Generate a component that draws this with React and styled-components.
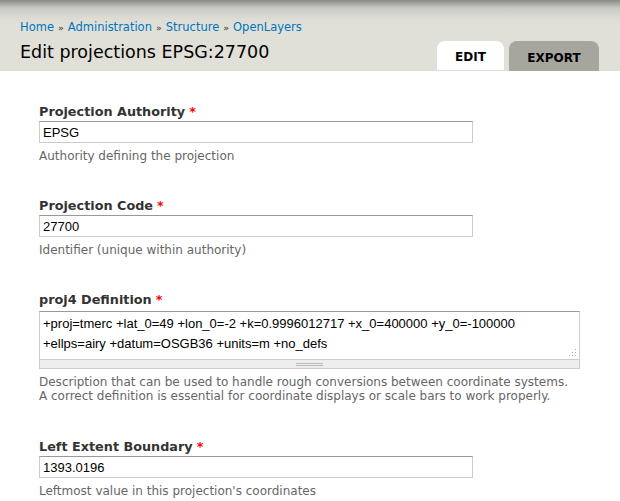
import React from "react";
import styled, { createGlobalStyle } from "styled-components";

const Global = createGlobalStyle`
  html, body {
    margin: 0;
    padding: 0;
    background: #fff;
  }
  body {
    font-family: "DejaVu Sans", Verdana, sans-serif;
    font-size: 13px;
    color: #333;
  }
`;

// header band with breadcrumb, title and tabs
const Header = styled.div`
  background: linear-gradient(to bottom, #8b8b86 0px, #c9c9c3 8px, #dcdcd5 18px, #e0e0d8 26px);
  height: 71px;
  padding: 0 20px;
  display: flex;
  justify-content: space-between;
  align-items: flex-end;
  box-sizing: border-box;
`;

const Titles = styled.div`
  padding-bottom: 8px;
`;

const Breadcrumb = styled.div`
  font-size: 11.5px;
  line-height: 16px;
  margin-bottom: 5px;
  a {
    color: #0074bd;
    text-decoration: none;
  }
  span {
    color: #333;
    font-size: 9.5px;
    margin: 0 4px;
  }
`;

const Title = styled.h1`
  margin: 0;
  font-weight: normal;
  font-size: 17.5px;
  line-height: 22px;
  color: #000;
`;

const Tabs = styled.div`
  display: flex;
  gap: 5px;
  margin-right: 1px;
`;

const Tab = styled.div`
  height: ${(p) => (p.$active ? "29px" : "30px")};
  width: ${(p) => p.$w}px;
  padding-top: 3px;
  box-sizing: border-box;
  display: flex;
  align-items: center;
  justify-content: center;
  background: ${(p) => (p.$active ? "#fff" : "#a6a69e")};
  border-radius: 8px 8px 0 0;
  font-weight: bold;
  font-size: 12px;
  color: #000;
  text-transform: uppercase;
`;

const Form = styled.div`
  padding: 33px 39px 0;
`;

const Field = styled.div`
  margin-bottom: ${(p) => p.$gap || 35}px;
`;

const Label = styled.label`
  display: block;
  font-weight: bold;
  font-size: 12.8px;
  line-height: 16px;
  color: #333;
  margin-bottom: 1px;
`;

const Req = styled.span`
  color: #f00;
  margin-left: 4px;
`;

const Input = styled.input`
  display: block;
  width: 434px;
  height: 22px;
  box-sizing: border-box;
  border: 1px solid #ccc;
  border-top-color: #999;
  padding: 2px 3px;
  font-family: "Liberation Sans", Arial, sans-serif;
  font-size: 13px;
  color: #000;
  outline: none;
`;

const AreaWrap = styled.div`
  width: 541px;
  margin-top: 3px;
  position: relative;
`;

const Area = styled.textarea`
  display: block;
  width: 100%;
  height: 48px;
  box-sizing: border-box;
  border: 1px solid #ccc;
  border-top-color: #999;
  border-bottom: none;
  padding: 2px 3px;
  margin: 0;
  resize: none;
  font-family: "Liberation Sans", Arial, sans-serif;
  font-size: 13px;
  line-height: 20px;
  color: #000;
  outline: none;
  overflow: hidden;
`;

const ResizeDots = styled.svg`
  position: absolute;
  right: 3px;
  top: 37px;
  width: 9px;
  height: 9px;
`;

const Grippie = styled.div`
  height: 10px;
  background: #eee;
  border: 1px solid #ccc;
  box-sizing: border-box;
  display: flex;
  align-items: center;
  justify-content: center;
  &::after {
    content: "";
    width: 27px;
    height: 3px;
    border-top: 1px solid #bbb;
    border-bottom: 1px solid #bbb;
    box-sizing: border-box;
  }
`;

const Description = styled.div`
  font-size: 12px;
  line-height: 14px;
  color: #666;
  margin-top: ${(p) => p.$top || 6}px;
`;

const fields = [
  {
    label: "Projection Authority",
    value: "EPSG",
    desc: "Authority defining the projection",
  },
  {
    label: "Projection Code",
    value: "27700",
    desc: "Identifier (unique within authority)",
  },
];

// small dotted triangle in the textarea corner
const dots = [
  [7, 1],
  [4, 4], [7, 4],
  [1, 7], [4, 7], [7, 7],
];

export default function App() {
  return (
    <>
      <Global />
      <Header>
        <Titles>
          <Breadcrumb>
            <a href="#">Home</a>
            <span>»</span>
            <a href="#">Administration</a>
            <span>»</span>
            <a href="#">Structure</a>
            <span>»</span>
            <a href="#">OpenLayers</a>
          </Breadcrumb>
          <Title>Edit projections EPSG:27700</Title>
        </Titles>
        <Tabs>
          <Tab $active $w={67}>Edit</Tab>
          <Tab $w={90}>Export</Tab>
        </Tabs>
      </Header>
      <Form>
        {fields.map((f) => (
          <Field key={f.label}>
            <Label>
              {f.label}
              <Req>*</Req>
            </Label>
            <Input defaultValue={f.value} />
            <Description>{f.desc}</Description>
          </Field>
        ))}
        <Field $gap={36}>
          <Label>
            proj4 Definition
            <Req>*</Req>
          </Label>
          <AreaWrap>
            <Area
              defaultValue={
                "+proj=tmerc +lat_0=49 +lon_0=-2 +k=0.9996012717 +x_0=400000 +y_0=-100000 +ellps=airy +datum=OSGB36 +units=m +no_defs"
              }
            />
            <ResizeDots viewBox="0 0 9 9">
              {dots.map(([x, y]) => (
                <rect key={`${x}-${y}`} x={x} y={y} width="1" height="1" fill="#aaa" />
              ))}
            </ResizeDots>
            <Grippie />
          </AreaWrap>
          <Description $top={6}>
            Description that can be used to handle rough conversions between coordinate systems.
            <br />A correct definition is essential for coordinate displays or scale bars to work properly.
          </Description>
        </Field>
        <Field>
          <Label>
            Left Extent Boundary
            <Req>*</Req>
          </Label>
          <Input defaultValue="1393.0196" />
          <Description>Leftmost value in this projection's coordinates</Description>
        </Field>
      </Form>
    </>
  );
}
